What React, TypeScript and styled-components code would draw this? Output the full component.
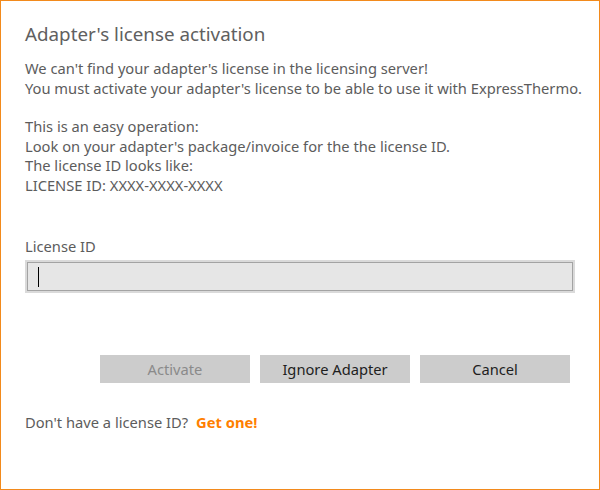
import styled, { createGlobalStyle } from "styled-components";

const GlobalStyle = createGlobalStyle`
  html, body {
    margin: 0;
    padding: 0;
    background: #ffffff;
  }
  body {
    font-family: "Segoe UI", "Noto Sans", "Open Sans", sans-serif;
  }
`;

const App = () => {
  return (
    <>
      <GlobalStyle />
      <Dialog>
        <Title>Adapter's license activation</Title>
        <Paragraph>
          We can't find your adapter's license in the licensing server!
          <br />
          You must activate your adapter's license to be able to use it with
          ExpressThermo.
        </Paragraph>
        <Paragraph $spaced>
          This is an easy operation:
          <br />
          Look on your adapter's package/invoice for the the license ID.
          <br />
          The license ID looks like:
          <br />
          LICENSE ID: XXXX-XXXX-XXXX
        </Paragraph>

        <Field>
          <Label htmlFor="license-id">License ID</Label>
          <InputFrame>
            <Input id="license-id" />
            {/* text caret, the field has focus in the screenshot */}
            <Caret />
          </InputFrame>
        </Field>

        <ButtonRow>
          <Button disabled>Activate</Button>
          <Button>Ignore Adapter</Button>
          <Button>Cancel</Button>
        </ButtonRow>

        <Footer>
          <span>Don't have a license ID?</span>
          <GetLink href="#">Get one!</GetLink>
        </Footer>
      </Dialog>
    </>
  );
};

export default App;

const Dialog = styled.div`
  box-sizing: border-box;
  width: 600px;
  height: 490px;
  border: 1px solid #f28a1c;
  padding: 19px 25px 0 24px;
  display: flex;
  flex-direction: column;
  color: #5c5c5c;
`;

const Title = styled.h1`
  margin: 0;
  font-size: 18.8px;
  font-weight: 400;
  line-height: 28px;
  color: #606060;
`;

const Paragraph = styled.p<{ $spaced?: boolean }>`
  margin: ${(p) => (p.$spaced ? "19px" : "11px")} 0 0;
  font-size: 14.7px;
  line-height: 19.5px;
  white-space: nowrap;
`;

const Field = styled.div`
  display: flex;
  flex-direction: column;
  margin-top: 42px;
  gap: 4px;
`;

const Label = styled.label`
  font-size: 14.7px;
  line-height: 19px;
`;

const InputFrame = styled.div`
  position: relative;
  width: 550px;
  box-sizing: border-box;
  border: 2px solid #dadada;
`;

const Input = styled.input`
  display: block;
  box-sizing: border-box;
  width: 100%;
  height: 29px;
  margin: 0;
  padding: 0 10px;
  border: 1px solid #a3a3a3;
  background: #e6e6e6;
  font: inherit;
  font-size: 14.7px;
  color: #222;
  outline: none;
`;

const Caret = styled.span`
  position: absolute;
  left: 11px;
  top: 5px;
  width: 1px;
  height: 20px;
  background: #000;
`;

const ButtonRow = styled.div`
  display: flex;
  justify-content: flex-end;
  gap: 10px;
  margin-top: 62px;
  padding-right: 4px;
`;

const Button = styled.button`
  width: 150px;
  height: 28px;
  border: none;
  background: #cccccc;
  font-family: inherit;
  font-size: 14.7px;
  color: #1e1e1e;
  padding: 0;

  &:disabled {
    color: #8a8a8a;
  }
`;

const Footer = styled.div`
  display: flex;
  align-items: baseline;
  gap: 8px;
  margin-top: 29px;
  font-size: 14.7px;
  line-height: 20px;
`;

const GetLink = styled.a`
  color: #ff7f00;
  font-weight: 700;
  text-decoration: none;
`;
